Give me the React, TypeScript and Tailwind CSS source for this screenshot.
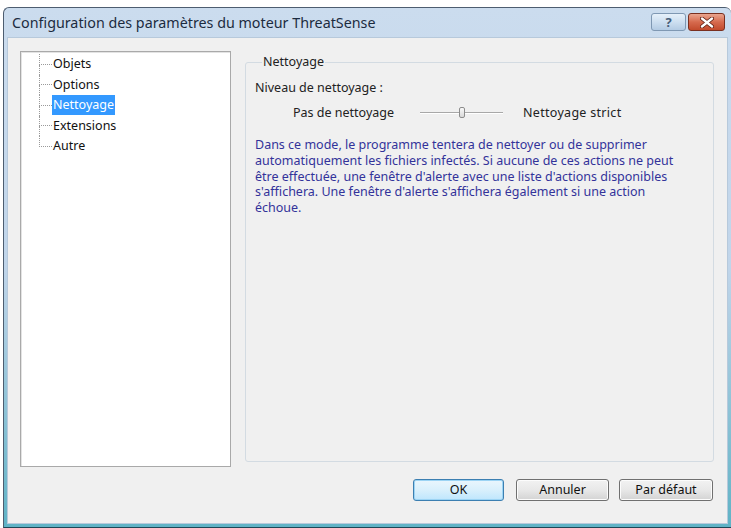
export default function App() {
  const items = ["Objets", "Options", "Nettoyage", "Extensions", "Autre"];
  const selected = "Nettoyage";

  return (
    <div className="w-[731px] h-[528px] bg-white pt-[7px] pl-[3px] font-['Noto_Sans',sans-serif] text-[12px] text-black">
      <div className="h-full w-full flex flex-col rounded-t-[6px] border border-r-0 border-[#4d5d70] border-b-[#1f4656] bg-gradient-to-b from-[#cbdcee] via-[#c0d5ea] to-[#5fb3c6] px-[3px] pb-[3px]">
        {/* title bar */}
        <div className="h-[29px] flex items-start">
          <div className="flex-1 h-full flex items-center pl-[5px] text-[14.3px] text-[#1c2b3f]">
            Configuration des paramètres du moteur ThreatSense
          </div>
          <div className="flex mt-[5px] mr-[3px] gap-[2px]">
            <div className="w-[35px] h-[18px] rounded-[3px] border border-[#7f98b3] bg-gradient-to-b from-[#e6f0fa] via-[#cddff0] to-[#b3cbe3] flex items-center justify-center text-[13px] font-bold text-[#465d78] leading-none">
              ?
            </div>
            <div className="w-[37px] h-[18px] rounded-[3px] border border-[#7a3020] bg-gradient-to-b from-[#e9a58f] via-[#d66a4e] to-[#c24a2c] flex items-center justify-center">
              <svg width="14" height="11" viewBox="0 0 14 11">
                <path d="M2 1.5 L12 9.5 M12 1.5 L2 9.5" stroke="#5b1c10" strokeWidth="4" strokeLinecap="round" />
                <path d="M2 1.5 L12 9.5 M12 1.5 L2 9.5" stroke="#ffffff" strokeWidth="2.4" strokeLinecap="round" />
              </svg>
            </div>
          </div>
        </div>

        {/* client area */}
        <div className="flex-1 bg-[#f0f0f0] border border-[#b7c9db] pt-[13px] pl-[12px] pr-[13px] flex flex-col">
          <div className="flex gap-[14px]">
            {/* tree */}
            <div className="w-[211px] h-[416px] bg-white border border-[#a9a9a9] shadow-[inset_1px_1px_0_#e3e3e3] pt-[2px] pl-[18px]">
              {items.map((it, i) => {
                const last = i === items.length - 1;
                return (
                  <div key={it} className="h-[20.5px] flex items-stretch">
                    <div className="w-[13px] flex flex-col">
                      <div className="flex-1 border-l border-b border-dotted border-[#9a9a9a]" />
                      <div className={`flex-1 ${last ? "" : "border-l border-dotted border-[#9a9a9a]"}`} />
                    </div>
                    <div className="flex items-center">
                      <span
                        className={`px-[1px] h-[20px] leading-[20px] text-[12.5px] ${
                          it === selected ? "bg-[#3399ff] text-white" : "text-[#111]"
                        }`}
                      >
                        {it}
                      </span>
                    </div>
                  </div>
                );
              })}
            </div>

            {/* group box */}
            <fieldset className="flex-1 mt-[4px] h-[407px] border border-[#d3dbe2] rounded-[3px] px-[9px]">
              <legend className="ml-[7px] px-[1px] leading-[14px] text-[12.5px] text-[#222]">Nettoyage</legend>
              <div className="mt-[11px] h-[15px] leading-[15px] text-[12.5px] text-[#222]">Niveau de nettoyage :</div>
              <div className="mt-[10px] h-[15px] flex items-center text-[12.5px] text-[#222]">
                <div className="w-[165px] pl-[38px] leading-[15px]">Pas de nettoyage</div>
                <div className="w-[83px] flex items-center">
                  <div className="w-[39px] h-[2px] border-t border-[#a8a8a8] border-b border-b-white" />
                  <div className="w-[6px] h-[11px] rounded-[2px] border border-[#8c8c8c] bg-gradient-to-b from-[#f8f8f8] to-[#d9d9d9]" />
                  <div className="flex-1 h-[2px] border-t border-[#a8a8a8] border-b border-b-white" />
                </div>
                <div className="ml-[20px] leading-[15px] tracking-[0.3px]">Nettoyage strict</div>
              </div>
              <p className="mt-[17px] text-[12.5px] leading-[15.8px] text-[#33339a] whitespace-nowrap">
                Dans ce mode, le programme tentera de nettoyer ou de supprimer
                <br />
                automatiquement les fichiers infectés. Si aucune de ces actions ne peut
                <br />
                être effectuée, une fenêtre d'alerte avec une liste d'actions disponibles
                <br />
                s'affichera. Une fenêtre d'alerte s'affichera également si une action
                <br />
                échoue.
              </p>
            </fieldset>
          </div>

          {/* buttons */}
          <div className="mt-[12px] mr-[1px] flex justify-end text-[12.5px] text-[#111]">
            <button className="w-[91px] h-[22px] rounded-[3px] border border-[#3c7fb1] bg-gradient-to-b from-[#eaf6fd] via-[#d9f0fc] to-[#bee6fd] shadow-[inset_0_0_0_1px_#9cd4f4]">
              OK
            </button>
            <button className="ml-[12px] w-[93px] h-[22px] rounded-[3px] border border-[#707070] bg-gradient-to-b from-[#f2f2f2] via-[#e8e8e8] to-[#d3d3d3] shadow-[inset_0_0_0_1px_#fcfcfc]">
              Annuler
            </button>
            <button className="ml-[10px] w-[94px] h-[22px] rounded-[3px] border border-[#707070] bg-gradient-to-b from-[#f2f2f2] via-[#e8e8e8] to-[#d3d3d3] shadow-[inset_0_0_0_1px_#fcfcfc]">
              Par défaut
            </button>
          </div>
        </div>
      </div>
    </div>
  );
}
